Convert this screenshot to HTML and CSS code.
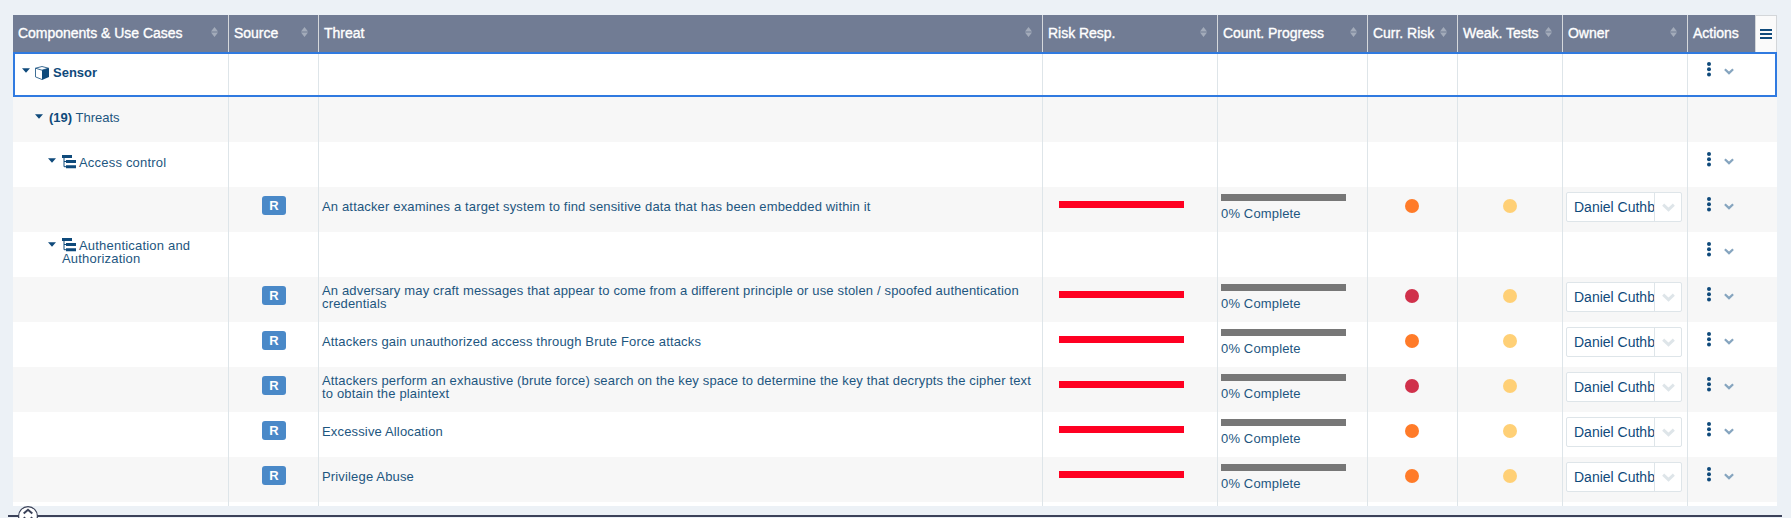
FILE: index.html
```html
<!DOCTYPE html>
<html lang="en">
<head>
<meta charset="utf-8">
<title>Threats</title>
<link rel="stylesheet" href="styles.css">
</head>
<body>
<svg class="defs" width="0" height="0">
  <symbol id="sort" viewBox="0 0 7 10"><path d="M3.500 0 7 4.600H0zM0 5.400h7L3.500 10z"/></symbol>
  <symbol id="caret" viewBox="0 0 8 5"><path d="M0 .2h8L4 4.800z"/></symbol>
  <symbol id="cube" viewBox="0 0 14 14"><path d="M.5 2.200 7 .5l6.500 1.700L7 4.200zM.5 2.200v8.700L7 13.500" fill="none" stroke="currentColor" stroke-width=".8"/><path d="M7 4.200 14 2V11L7 14z"/></symbol>
  <symbol id="tree" viewBox="0 0 14 14"><path d="M0 0h10v3H0zM4 5h10v3H4zM4 10.200h10v3H4z"/><path d="M2 2v9.700h3M2 6.500h3" fill="none" stroke="currentColor" stroke-width="1"/></symbol>
  <symbol id="dots" viewBox="0 0 4 15"><circle cx="2" cy="2" r="2"/><circle cx="2" cy="7.300" r="2"/><circle cx="2" cy="12.600" r="2"/></symbol>
  <symbol id="chev" viewBox="0 0 9 6"><path d="M.8 1 4.500 4.500 8.200 1" fill="none" stroke="currentColor" stroke-width="2"/></symbol>
</svg>
<main class="grid">
  <div class="row head">
    <div class="cell"><span>Components &amp; Use Cases</span><svg class="sort"><use href="#sort"/></svg></div>
    <div class="cell"><span>Source</span><svg class="sort"><use href="#sort"/></svg></div>
    <div class="cell"><span>Threat</span><svg class="sort"><use href="#sort"/></svg></div>
    <div class="cell"><span>Risk Resp.</span><svg class="sort"><use href="#sort"/></svg></div>
    <div class="cell"><span>Count. Progress</span><svg class="sort"><use href="#sort"/></svg></div>
    <div class="cell"><span>Curr. Risk</span><svg class="sort"><use href="#sort"/></svg></div>
    <div class="cell"><span>Weak. Tests</span><svg class="sort"><use href="#sort"/></svg></div>
    <div class="cell"><span>Owner</span><svg class="sort"><use href="#sort"/></svg></div>
    <div class="cell last"><span>Actions</span><button class="menu" aria-label="Menu"><i></i><i></i><i></i></button></div>
  </div>

  <div class="row selected">
    <div class="cell tree l1"><svg class="caret"><use href="#caret"/></svg><div class="label"><svg class="ico"><use href="#cube"/></svg><b>Sensor</b></div></div>
    <div class="cell"></div><div class="cell"></div><div class="cell"></div><div class="cell"></div><div class="cell"></div><div class="cell"></div><div class="cell"></div>
    <div class="cell actions"><svg class="dots"><use href="#dots"/></svg><svg class="chev"><use href="#chev"/></svg></div>
  </div>
  <div class="row">
    <div class="cell tree l2"><svg class="caret"><use href="#caret"/></svg><div class="label"><b>(19)</b> Threats</div></div>
    <div class="cell"></div><div class="cell"></div><div class="cell"></div><div class="cell"></div><div class="cell"></div><div class="cell"></div><div class="cell"></div><div class="cell actions"></div>
  </div>
  <div class="row">
    <div class="cell tree l3"><svg class="caret"><use href="#caret"/></svg><div class="label"><svg class="ico"><use href="#tree"/></svg>Access control</div></div>
    <div class="cell"></div><div class="cell"></div><div class="cell"></div><div class="cell"></div><div class="cell"></div><div class="cell"></div><div class="cell"></div>
    <div class="cell actions"><svg class="dots"><use href="#dots"/></svg><svg class="chev"><use href="#chev"/></svg></div>
  </div>
  <div class="row">
    <div class="cell"></div>
    <div class="cell source"><span class="badge">R</span></div>
    <div class="cell threat"><p>An attacker examines a target system to find sensitive data that has been embedded within it</p></div>
    <div class="cell risk"><div class="bar"></div></div>
    <div class="cell count"><div class="bar"></div><span>0% Complete</span></div>
    <div class="cell dot"><i class="orange"></i></div>
    <div class="cell dot weak"><i></i></div>
    <div class="cell owner"><div class="select"><span>Daniel Cuthbert</span><em><svg class="pick"><use href="#chev"/></svg></em></div></div>
    <div class="cell actions"><svg class="dots"><use href="#dots"/></svg><svg class="chev"><use href="#chev"/></svg></div>
  </div>
  <div class="row">
    <div class="cell tree l3 two"><svg class="caret"><use href="#caret"/></svg><div class="label"><svg class="ico"><use href="#tree"/></svg>Authentication and<br>Authorization</div></div>
    <div class="cell"></div><div class="cell"></div><div class="cell"></div><div class="cell"></div><div class="cell"></div><div class="cell"></div><div class="cell"></div>
    <div class="cell actions"><svg class="dots"><use href="#dots"/></svg><svg class="chev"><use href="#chev"/></svg></div>
  </div>
  <div class="row">
    <div class="cell"></div>
    <div class="cell source"><span class="badge">R</span></div>
    <div class="cell threat"><p>An adversary may craft messages that appear to come from a different principle or use stolen / spoofed authentication<br>credentials</p></div>
    <div class="cell risk"><div class="bar"></div></div>
    <div class="cell count"><div class="bar"></div><span>0% Complete</span></div>
    <div class="cell dot"><i class="red"></i></div>
    <div class="cell dot weak"><i></i></div>
    <div class="cell owner"><div class="select"><span>Daniel Cuthbert</span><em><svg class="pick"><use href="#chev"/></svg></em></div></div>
    <div class="cell actions"><svg class="dots"><use href="#dots"/></svg><svg class="chev"><use href="#chev"/></svg></div>
  </div>
  <div class="row">
    <div class="cell"></div>
    <div class="cell source"><span class="badge">R</span></div>
    <div class="cell threat"><p>Attackers gain unauthorized access through Brute Force attacks</p></div>
    <div class="cell risk"><div class="bar"></div></div>
    <div class="cell count"><div class="bar"></div><span>0% Complete</span></div>
    <div class="cell dot"><i class="orange"></i></div>
    <div class="cell dot weak"><i></i></div>
    <div class="cell owner"><div class="select"><span>Daniel Cuthbert</span><em><svg class="pick"><use href="#chev"/></svg></em></div></div>
    <div class="cell actions"><svg class="dots"><use href="#dots"/></svg><svg class="chev"><use href="#chev"/></svg></div>
  </div>
  <div class="row">
    <div class="cell"></div>
    <div class="cell source"><span class="badge">R</span></div>
    <div class="cell threat"><p>Attackers perform an exhaustive (brute force) search on the key space to determine the key that decrypts the cipher text<br>to obtain the plaintext</p></div>
    <div class="cell risk"><div class="bar"></div></div>
    <div class="cell count"><div class="bar"></div><span>0% Complete</span></div>
    <div class="cell dot"><i class="red"></i></div>
    <div class="cell dot weak"><i></i></div>
    <div class="cell owner"><div class="select"><span>Daniel Cuthbert</span><em><svg class="pick"><use href="#chev"/></svg></em></div></div>
    <div class="cell actions"><svg class="dots"><use href="#dots"/></svg><svg class="chev"><use href="#chev"/></svg></div>
  </div>
  <div class="row">
    <div class="cell"></div>
    <div class="cell source"><span class="badge">R</span></div>
    <div class="cell threat"><p>Excessive Allocation</p></div>
    <div class="cell risk"><div class="bar"></div></div>
    <div class="cell count"><div class="bar"></div><span>0% Complete</span></div>
    <div class="cell dot"><i class="orange"></i></div>
    <div class="cell dot weak"><i></i></div>
    <div class="cell owner"><div class="select"><span>Daniel Cuthbert</span><em><svg class="pick"><use href="#chev"/></svg></em></div></div>
    <div class="cell actions"><svg class="dots"><use href="#dots"/></svg><svg class="chev"><use href="#chev"/></svg></div>
  </div>
  <div class="row">
    <div class="cell"></div>
    <div class="cell source"><span class="badge">R</span></div>
    <div class="cell threat"><p>Privilege Abuse</p></div>
    <div class="cell risk"><div class="bar"></div></div>
    <div class="cell count"><div class="bar"></div><span>0% Complete</span></div>
    <div class="cell dot"><i class="orange"></i></div>
    <div class="cell dot weak"><i></i></div>
    <div class="cell owner"><div class="select"><span>Daniel Cuthbert</span><em><svg class="pick"><use href="#chev"/></svg></em></div></div>
    <div class="cell actions"><svg class="dots"><use href="#dots"/></svg><svg class="chev"><use href="#chev"/></svg></div>
  </div>
  <div class="row stub">
    <div class="cell"></div><div class="cell"></div><div class="cell"></div><div class="cell"></div><div class="cell"></div><div class="cell"></div><div class="cell"></div><div class="cell"></div><div class="cell"></div>
  </div>
</main>
<footer class="splitter">
  <svg class="handle" viewBox="0 0 20 20"><circle cx="10" cy="10" r="9.400" fill="#fff" stroke="#3b4259" stroke-width="1.200"/><path d="M5.700 7.600 10 3.800l4.300 3.800M5.700 11.300 10 15.100l4.300-3.800" fill="none" stroke="#3b4259" stroke-width="2"/></svg>
</footer>
</body>
</html>
```
FILE: styles.css
```css
* { box-sizing: border-box; }
body {
  margin: 0;
  height: 518px;
  overflow: hidden;
  padding: 15px 9px 0 8px;
  background: #ecf1f6;
  color: #1d5680;
  font: 13px/13px "Liberation Sans", Arial, sans-serif;
}
.defs { position: absolute; }
svg { display: block; flex: none; fill: currentColor; }
b { color: #0f4a7b; }

.grid { width: 1764px; margin-left: 5px; }
.row {
  display: grid;
  grid-template-columns: 216px 90px 724px 175px 150px 90px 105px 125px 89px;
  height: 45px;
  background: #fff;
}
.row:nth-child(odd) { background: #f7f7f7; }
.cell { border-right: 1px solid #dee5e9; min-width: 0; white-space: nowrap; }
.cell:last-child { border-right: 0; }
.row.stub { height: 4px; background: #fff; }
.selected { outline: 2px solid #307ae0; outline-offset: -2px; }

.row.head { height: 37px; background: #717c94; color: #fff; }
.head .cell {
  display: flex;
  justify-content: space-between;
  align-items: center;
  padding: 0 10px 3px 5px;
  border-color: #d5d8dc;
  font-size: 14px;
  line-height: 16px;
  letter-spacing: -.02px;
  -webkit-text-stroke: .35px #fff;
}
.head span { padding-top: 1px; }
.sort { width: 7px; height: 10px; margin-top: -1px; color: #a3abba; }
.head .cell.last { padding: 0 0 0 5px; }
.head .last span { padding-bottom: 3px; }
.menu {
  display: flex;
  flex-direction: column;
  align-items: center;
  justify-content: center;
  gap: 2px;
  width: 22px;
  height: 38px;
  margin-bottom: -1px;
  padding: 0;
  border: 1px solid #d3d6d9;
  background: #fafafa;
}
.menu i { width: 12px; height: 2px; background: #0f4a7b; }

.tree { display: flex; gap: 5px; }
.l1 { padding: 16px 0 0 9px; }
.l2 { padding: 17px 0 0 22px; }
.l3 { padding: 16px 0 0 35px; letter-spacing: .2px; }
.two { padding-top: 10px; }
.caret { width: 8px; height: 5px; color: #0f4a7b; }
.l2 .label { margin-top: -3px; }
.l1 .label, .l3 .label { margin-top: -2px; }
.two .label { margin-top: -3px; }
.label { padding-left: 1px; }
.l1 .label { padding-left: 0; }
.ico { display: inline-block; width: 14px; height: 14px; margin: -2px 3px -3px 0; color: #0f4a7b; }
.l1 .ico { margin-right: 4px; }
.l3 .ico { margin-top: -3px; margin-bottom: -2px; }

.source { display: flex; justify-content: center; padding: 9px 0 0 1px; }
.badge {
  width: 24px;
  height: 19px;
  border-radius: 3px;
  background: #4a89c8;
  color: #fff;
  font-weight: bold;
  line-height: 19px;
  text-align: center;
}
.threat { display: flex; align-items: center; padding: 0 0 6px 3px; letter-spacing: .158px; }
.threat p { margin: 0; }
.bar { width: 125px; height: 7px; }
.risk { padding: 14px 0 0 16px; }
.risk .bar { background: #ff0022; }
.count { padding: 7px 0 0 3px; letter-spacing: .15px; }
.count .bar { margin-bottom: 6px; background: #777; }
.dot { display: flex; justify-content: center; padding: 12px 1px 0 0; }
.dot i { width: 14px; height: 14px; border-radius: 50%; }
.dot.weak { padding-right: 0; }
.orange { background: #ff7b29; }
.red { background: #d0314b; }
.weak i { background: #ffd076; }
.owner { padding: 5px 0 0 3px; }
.select {
  display: flex;
  width: 116px;
  height: 30px;
  border: 1px solid #dee5e9;
  border-radius: 2px;
  background: #fff;
  color: #0f4a7b;
  font-size: 14px;
  line-height: 29px;
}
.select span { width: 88px; padding-left: 7px; overflow: hidden; }
.select em { display: grid; place-items: center; width: 27px; border-left: 1px solid #dee5e9; }
.pick { width: 13px; height: 9px; color: #dee5e9; }
.actions { display: flex; gap: 13px; padding: 10px 0 0 19px; }
.dots { width: 4px; height: 15px; color: #0f4a7b; }
.chev { width: 10px; height: 7px; margin-top: 6px; color: #86a5bf; }

.splitter { height: 2px; margin-top: 9px; background: #3b4259; }
.handle { width: 20px; height: 20px; position: relative; top: -9px; left: 10px; }
```
